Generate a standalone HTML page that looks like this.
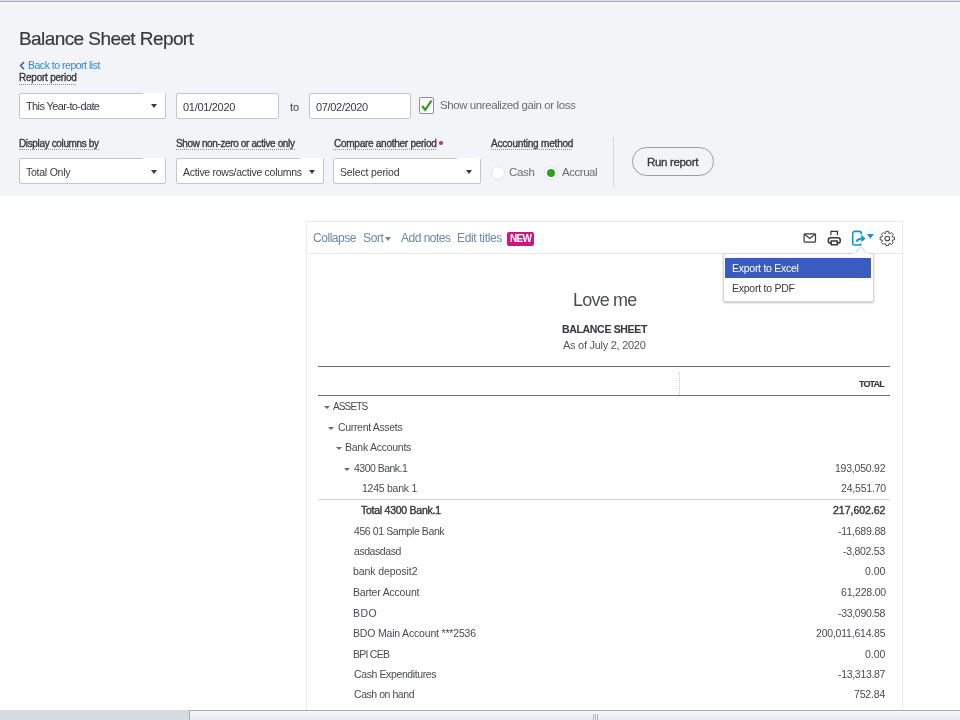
<!DOCTYPE html>
<html><head><meta charset="utf-8">
<style>
*{margin:0;padding:0;box-sizing:border-box}
html,body{width:960px;height:720px;overflow:hidden;background:#fff;font-family:"Liberation Sans",sans-serif;color:#393a3d}
.a{position:absolute}
.t{position:absolute;white-space:nowrap;line-height:40px;will-change:transform}
.bx{position:absolute;background:#fff;border:1px solid #c4c6cb;border-radius:2px}
.cr{position:absolute;width:0;height:0;border-left:3px solid transparent;border-right:3px solid transparent;border-top:4.5px solid #393a3d}
.ul{position:absolute;height:0;border-top:1px dotted #8d9096}
.tri{position:absolute;width:0;height:0;border-left:3px solid transparent;border-right:3px solid transparent;border-top:3.5px solid #6b6c72}
</style></head><body>
<div class="a" style="left:0;top:0;width:960px;height:196px;background:#f3f4f8"></div>
<div class="a" style="left:0;top:0;width:960px;height:1px;background:#d9dde5"></div>
<div class="a" style="left:0;top:1px;width:960px;height:1px;background:#a6adb7"></div>
<div class="a" style="left:0;top:2px;width:960px;height:1px;background:#f7f8fb"></div>

<!-- back chevron -->
<svg class="a" style="left:19px;top:61px" width="7" height="10" viewBox="0 0 7 10"><path d="M5 1 L1.6 4.6 L5 8.2" fill="none" stroke="#3a62c0" stroke-width="1.6"/></svg>

<!-- underlines -->
<div class="ul" style="left:19px;top:84px;width:57px"></div>
<div class="ul" style="left:19px;top:149px;width:80px"></div>
<div class="ul" style="left:176px;top:149px;width:119px"></div>
<div class="ul" style="left:333px;top:149px;width:103px"></div>
<div class="ul" style="left:491px;top:149px;width:81px"></div>
<div class="a" style="left:439px;top:141px;width:3.5px;height:3.5px;border-radius:50%;background:#d52b8c"></div>

<!-- row 1 boxes -->
<div class="bx" style="left:19px;top:93px;width:147px;height:26px"></div>
<div class="cr" style="left:151px;top:104px"></div>
<div class="bx" style="left:176px;top:93px;width:103px;height:26px"></div>
<div class="bx" style="left:309px;top:93px;width:102px;height:26px"></div>
<div class="a" style="left:419px;top:97px;width:15px;height:17px;background:#fff;border:1px solid #8d9096;border-radius:2px"></div>
<svg class="a" style="left:420px;top:98px" width="14" height="15" viewBox="0 0 14 15"><path d="M2.2 8 L5.2 11.8 L11.6 2.5" fill="none" stroke="#2ca01c" stroke-width="2.2"/></svg>

<!-- row 2 boxes -->
<div class="bx" style="left:19px;top:158px;width:147px;height:26px"></div>
<div class="cr" style="left:151px;top:170px"></div>
<div class="bx" style="left:176px;top:158px;width:148px;height:26px"></div>
<div class="cr" style="left:309px;top:170px"></div>
<div class="bx" style="left:333px;top:158px;width:148px;height:26px"></div>
<div class="cr" style="left:466px;top:170px"></div>

<div class="a" style="left:143px;top:93px;width:22px;height:1px;background:#fff"></div>
<div class="a" style="left:143px;top:158px;width:22px;height:1px;background:#fff"></div>
<div class="a" style="left:300px;top:158px;width:23px;height:1px;background:#fff"></div>
<div class="a" style="left:457px;top:158px;width:23px;height:1px;background:#fff"></div>
<!-- radios -->
<div class="a" style="left:491px;top:165.5px;width:14px;height:14px;border-radius:50%;background:#fff;border:1px solid #e1e2e5"></div>
<div class="a" style="left:544px;top:165.5px;width:14px;height:14px;border-radius:50%;background:#fff;border:1px solid #e1e2e5"></div>
<div class="a" style="left:547px;top:168.5px;width:8px;height:8px;border-radius:50%;background:#2ca01c"></div>

<div class="a" style="left:613px;top:137px;width:1px;height:50px;background:#d4d7dc"></div>
<div class="a" style="left:632px;top:146.5px;width:82px;height:29px;border:1.2px solid #9a9ca2;border-radius:15px"></div>

<!-- panel -->
<div class="a" style="left:306px;top:221px;width:597px;height:489px;border:1px solid #e6ebf1;border-bottom:none"></div>
<div class="a" style="left:307px;top:253px;width:595px;height:1px;background:#e6ebf1"></div>
<div class="a" style="left:385px;top:236.5px;width:0;height:0;border-left:3.7px solid transparent;border-right:3.7px solid transparent;border-top:4px solid #6a87a6"></div>
<div class="a" style="left:507px;top:232px;width:27px;height:13.5px;background:#c9177e;border-radius:2px"></div>

<!-- icons -->
<svg class="a" style="left:798px;top:226px" width="100" height="25" viewBox="0 0 100 25">
<rect x="6.1" y="7.85" width="11.4" height="8.3" rx="0.8" fill="none" stroke="#393a3d" stroke-width="1.2"/>
<path d="M6.6 8.3 L11.8 12.4 L17 8.3" fill="none" stroke="#393a3d" stroke-width="1.2"/>
<path d="M32.85 9.25 V5.35 H39.4 V9.25" fill="none" stroke="#393a3d" stroke-width="1.2"/>
<rect x="30.25" y="11.75" width="12" height="5.5" rx="2.5" fill="none" stroke="#393a3d" stroke-width="1.5"/>
<rect x="33.25" y="15" width="6" height="3.75" fill="#fff" stroke="#393a3d" stroke-width="1.5"/>
<g transform="translate(50,0)"><path d="M13.3 8.6 V7.4 A2 2 0 0 0 11.3 5.4 H6.7 A2 2 0 0 0 4.7 7.4 V17 A2 2 0 0 0 6.7 19 H11.5 A1.8 1.8 0 0 0 13.3 17.7" fill="none" stroke="#0d96d6" stroke-width="1.6"/>
<path d="M8.6 15.6 C9.5 13.2 11.5 12.5 15 12.5" fill="none" stroke="#0d96d6" stroke-width="2"/>
<path d="M13.2 10 L16.2 12.5 L13.2 15" fill="none" stroke="#0d96d6" stroke-width="1.8"/>
<polygon points="19,8.1 25.8,8.1 22.4,12.8" fill="#0d96d6"/>
</g>
<path transform="translate(80.8,3.5)" fill="none" stroke="#46474b" stroke-width="1" d="M6.98 3.71 L7.12 1.88 L9.88 1.88 L10.02 3.71 L11.17 4.19 L12.55 2.99 L14.51 4.95 L13.31 6.33 L13.79 7.48 L15.62 7.62 L15.62 10.38 L13.79 10.52 L13.31 11.67 L14.51 13.05 L12.55 15.01 L11.17 13.81 L10.02 14.29 L9.88 16.12 L7.12 16.12 L6.98 14.29 L5.83 13.81 L4.45 15.01 L2.49 13.05 L3.69 11.67 L3.21 10.52 L1.38 10.38 L1.38 7.62 L3.21 7.48 L3.69 6.33 L2.49 4.95 L4.45 2.99 L5.83 4.19 Z"/>
<circle cx="89.3" cy="12.5" r="2.3" fill="none" stroke="#46474b" stroke-width="1.1"/>
</svg>

<!-- dropdown -->
<div class="a" style="left:722.5px;top:252.5px;width:151px;height:49px;background:#fff;border:1px solid #d6d7da;border-radius:2px;box-shadow:0 1px 2px rgba(0,0,0,.25)"></div>
<svg class="a" style="left:854px;top:245px" width="14" height="9" viewBox="0 0 14 9"><path d="M1 8.2 L6.8 1.6 L12.6 8.2" fill="#fff" stroke="#cfd0d3" stroke-width="1"/><rect x="0" y="8" width="14" height="1.5" fill="#fff"/></svg>
<div class="a" style="left:725px;top:258px;width:146px;height:20px;background:#3a5bbf"></div>

<!-- report header lines -->
<div class="a" style="left:318px;top:366px;width:572px;height:1px;background:#6b6c72"></div>
<div class="a" style="left:318px;top:395px;width:572px;height:1px;background:#6b6c72"></div>
<div class="a" style="left:679px;top:372px;width:0;height:23px;border-left:1px dotted #c4c6cb"></div>
<div class="a" style="left:318px;top:499px;width:572px;height:1px;background:#d4d7dc"></div>

<!-- tree arrows -->
<div class="tri" style="left:323.5px;top:405.5px"></div>
<div class="tri" style="left:328px;top:426.5px"></div>
<div class="tri" style="left:336px;top:446.5px"></div>
<div class="tri" style="left:344px;top:467.5px"></div>

<div class="t" style="left:19.0px;top:19.4px;font-size:19px;-webkit-text-stroke:0.2px #393a3d;letter-spacing:-0.579px;color:#393a3d">Balance Sheet Report</div>
<div class="t" style="left:28.0px;top:45.0px;font-size:10.5px;letter-spacing:-0.489px;color:#2d8bd3">Back to report list</div>
<div class="t" style="left:19.2px;top:58.0px;font-size:10px;-webkit-text-stroke:0.35px #393a3d;letter-spacing:-0.233px;color:#393a3d">Report period</div>
<div class="t" style="left:25.7px;top:86.1px;font-size:11px;letter-spacing:-0.612px;color:#393a3d">This Year-to-date</div>
<div class="t" style="left:182.9px;top:86.6px;font-size:11px;letter-spacing:-0.3px;color:#393a3d">01/01/2020</div>
<div class="t" style="left:289.8px;top:86.6px;font-size:11px;letter-spacing:0px;color:#393a3d">to</div>
<div class="t" style="left:315.8px;top:86.6px;font-size:11px;letter-spacing:-0.322px;color:#393a3d">07/02/2020</div>
<div class="t" style="left:439.7px;top:84.5px;font-size:11.5px;letter-spacing:-0.419px;color:#6b6c72">Show unrealized gain or loss</div>
<div class="t" style="left:18.9px;top:123.5px;font-size:10px;-webkit-text-stroke:0.35px #393a3d;letter-spacing:-0.359px;color:#393a3d">Display columns by</div>
<div class="t" style="left:176.25px;top:123.5px;font-size:10px;-webkit-text-stroke:0.35px #393a3d;letter-spacing:-0.372px;color:#393a3d">Show non-zero or active only</div>
<div class="t" style="left:333.5px;top:123.5px;font-size:10px;-webkit-text-stroke:0.35px #393a3d;letter-spacing:-0.262px;color:#393a3d">Compare another period</div>
<div class="t" style="left:490.9px;top:123.5px;font-size:10px;-webkit-text-stroke:0.35px #393a3d;letter-spacing:-0.2px;color:#393a3d">Accounting method</div>
<div class="t" style="left:25.9px;top:151.6px;font-size:10.5px;letter-spacing:-0.244px;color:#393a3d">Total Only</div>
<div class="t" style="left:183.0px;top:151.6px;font-size:10.5px;letter-spacing:-0.28px;color:#393a3d">Active rows/active columns</div>
<div class="t" style="left:339.5px;top:151.6px;font-size:10.5px;letter-spacing:-0.142px;color:#393a3d">Select period</div>
<div class="t" style="left:508.5px;top:152.25px;font-size:11.5px;letter-spacing:-0.333px;color:#6b6c72">Cash</div>
<div class="t" style="left:562.0px;top:152.25px;font-size:11.5px;letter-spacing:-0.458px;color:#6b6c72">Accrual</div>
<div class="t" style="left:646.9px;top:141.5px;font-size:11.5px;-webkit-text-stroke:0.35px #393a3d;letter-spacing:-0.333px;color:#393a3d">Run report</div>
<div class="t" style="left:313.1px;top:217.8px;font-size:12px;letter-spacing:-0.457px;color:#6a87a6">Collapse</div>
<div class="t" style="left:363.0px;top:217.8px;font-size:12px;letter-spacing:-0.367px;color:#6a87a6">Sort</div>
<div class="t" style="left:400.5px;top:217.8px;font-size:12px;letter-spacing:-0.513px;color:#6a87a6">Add notes</div>
<div class="t" style="left:457.3px;top:217.8px;font-size:12px;letter-spacing:-0.34px;color:#6a87a6">Edit titles</div>
<div class="t" style="left:509.6px;top:218.7px;font-size:10px;font-weight:bold;letter-spacing:-0.7px;color:#ffffff">NEW</div>
<div class="t" style="left:732.1px;top:247.75px;font-size:10.5px;letter-spacing:-0.264px;color:#ffffff">Export to Excel</div>
<div class="t" style="left:732.1px;top:268.4px;font-size:10.5px;letter-spacing:-0.242px;color:#393a3d">Export to PDF</div>
<div class="t" style="left:572.5px;top:279.5px;font-size:18px;letter-spacing:-0.783px;color:#4d4e52">Love me</div>
<div class="t" style="left:561.6px;top:309.2px;font-size:10.5px;font-weight:bold;-webkit-text-stroke:0.1px #393a3d;letter-spacing:-0.325px;color:#393a3d">BALANCE SHEET</div>
<div class="t" style="left:563.3px;top:325.3px;font-size:11px;letter-spacing:-0.271px;color:#55565a">As of July 2, 2020</div>
<div class="t" style="left:859.25px;top:363.75px;font-size:9px;font-weight:bold;-webkit-text-stroke:0.15px #393a3d;letter-spacing:-0.875px;color:#393a3d">TOTAL</div>
<div class="t" style="left:333.3px;top:387.0px;font-size:10px;letter-spacing:-0.86px;color:#4a4b4f">ASSETS</div>
<div class="t" style="left:338.0px;top:406.8px;font-size:10.5px;letter-spacing:-0.323px;color:#4a4b4f">Current Assets</div>
<div class="t" style="left:344.8px;top:426.8px;font-size:10.5px;letter-spacing:-0.258px;color:#4a4b4f">Bank Accounts</div>
<div class="t" style="left:354.2px;top:447.7px;font-size:10.5px;letter-spacing:-0.52px;color:#4a4b4f">4300 Bank.1</div>
<div class="t" style="left:361.5px;top:468.0px;font-size:10.5px;letter-spacing:-0.25px;color:#4a4b4f">1245 bank 1</div>
<div class="t" style="left:360.8px;top:489.7px;font-size:10.5px;-webkit-text-stroke:0.4px #393a3d;letter-spacing:-0.256px;color:#393a3d">Total 4300 Bank.1</div>
<div class="t" style="left:354.2px;top:510.7px;font-size:10.5px;letter-spacing:-0.406px;color:#4a4b4f">456 01 Sample Bank</div>
<div class="t" style="left:354.2px;top:531.0px;font-size:10.5px;letter-spacing:-0.438px;color:#4a4b4f">asdasdasd</div>
<div class="t" style="left:353.2px;top:551.3px;font-size:10.5px;letter-spacing:-0.075px;color:#4a4b4f">bank deposit2</div>
<div class="t" style="left:353.2px;top:571.8px;font-size:10.5px;letter-spacing:-0.185px;color:#4a4b4f">Barter Account</div>
<div class="t" style="left:353.2px;top:592.7px;font-size:10.5px;letter-spacing:0.4px;color:#4a4b4f">BDO</div>
<div class="t" style="left:353.2px;top:613.0px;font-size:10.5px;letter-spacing:-0.183px;color:#4a4b4f">BDO Main Account ***2536</div>
<div class="t" style="left:353.2px;top:633.5px;font-size:10.5px;letter-spacing:-0.75px;color:#4a4b4f">BPI CEB</div>
<div class="t" style="left:354.2px;top:654.0px;font-size:10.5px;letter-spacing:-0.387px;color:#4a4b4f">Cash Expenditures</div>
<div class="t" style="left:354.2px;top:674.3px;font-size:10.5px;letter-spacing:-0.445px;color:#4a4b4f">Cash on hand</div>
<div class="t" style="left:835.0px;top:447.9px;font-size:10.5px;letter-spacing:-0.222px;color:#4a4b4f">193,050.92</div>
<div class="t" style="left:840.6px;top:468.0px;font-size:10.5px;letter-spacing:-0.2px;color:#4a4b4f">24,551.70</div>
<div class="t" style="left:833.1px;top:489.7px;font-size:10.5px;-webkit-text-stroke:0.4px #393a3d;letter-spacing:-0.011px;color:#393a3d">217,602.62</div>
<div class="t" style="left:837.5px;top:510.7px;font-size:10.5px;letter-spacing:-0.167px;color:#4a4b4f">-11,689.88</div>
<div class="t" style="left:843.2px;top:531.0px;font-size:10.5px;letter-spacing:-0.275px;color:#4a4b4f">-3,802.53</div>
<div class="t" style="left:865.0px;top:551.3px;font-size:10.5px;letter-spacing:0.0px;color:#4a4b4f">0.00</div>
<div class="t" style="left:840.6px;top:571.8px;font-size:10.5px;letter-spacing:-0.2px;color:#4a4b4f">61,228.00</div>
<div class="t" style="left:837.8px;top:592.7px;font-size:10.5px;letter-spacing:-0.311px;color:#4a4b4f">-33,090.58</div>
<div class="t" style="left:816.0px;top:613.0px;font-size:10.5px;letter-spacing:-0.208px;color:#4a4b4f">200,011,614.85</div>
<div class="t" style="left:865.0px;top:633.5px;font-size:10.5px;letter-spacing:0.0px;color:#4a4b4f">0.00</div>
<div class="t" style="left:837.8px;top:654.0px;font-size:10.5px;letter-spacing:-0.311px;color:#4a4b4f">-13,313.87</div>
<div class="t" style="left:853.8px;top:674.3px;font-size:10.5px;letter-spacing:-0.16px;color:#4a4b4f">752.84</div>

<!-- scrollbar -->
<div class="a" style="left:0;top:710px;width:960px;height:10px;background:#d6dae3"></div>
<div class="a" style="left:189px;top:710px;width:771px;height:10px;background:linear-gradient(#f6f7fa,#e6e9ef);border-top:1px solid #a5a9b1;border-left:1px solid #a5a9b1"></div>
<div class="a" style="left:593px;top:714px;width:1px;height:6px;background:#b4b8bf"></div>
<div class="a" style="left:595px;top:714px;width:1px;height:6px;background:#b4b8bf"></div>
<div class="a" style="left:597px;top:714px;width:1px;height:6px;background:#b4b8bf"></div>
</body></html>
